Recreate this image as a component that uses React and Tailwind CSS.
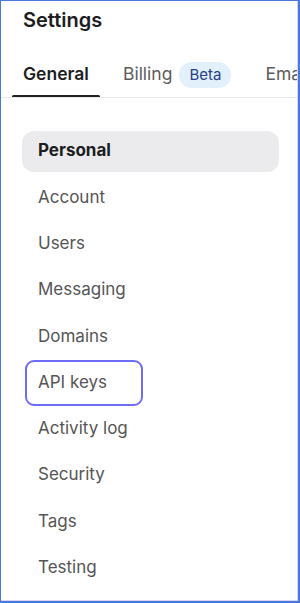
import React, { useState } from "react";

const menu = [
  "Personal",
  "Account",
  "Users",
  "Messaging",
  "Domains",
  "API keys",
  "Activity log",
  "Security",
  "Tags",
  "Testing",
];

const App = () => {
  const [tab, setTab] = useState("General");
  const [active, setActive] = useState("Personal");
  const focused = "API keys";

  return (
    <div
      className="w-[300px] h-[603px] overflow-hidden bg-white border-[#4a78d8] border-t border-l border-r-2 border-b-2"
      style={{ fontFamily: "Inter, 'Noto Sans', sans-serif" }}
    >
      <div className="h-full border-r border-b border-[#d9d4f5]">
        {/* header */}
        <h1 className="pl-[22px] pt-[5px] text-[20px] leading-[28px] font-semibold text-[#1d1d1f]">
          Settings
        </h1>

        {/* tabs */}
        <div className="mt-[24px] border-b border-[#e8e8ea] flex gap-[12px] pl-[11px] whitespace-nowrap overflow-hidden">
          {["General", "Billing", "Email"].map((t) => (
            <button
              key={t}
              onClick={() => setTab(t)}
              className={`relative shrink-0 flex items-center h-[39px] px-[11px] pb-[6px] text-[17.5px] ${
                tab === t ? "font-semibold text-[#1d1d1f]" : "text-[#5c5c5c]"
              }`}
            >
              {t}
              {t === "Billing" ? (
                <span className="ml-[7px] h-[26px] px-[10px] rounded-full bg-[#e2f0fc] text-[#27408b] text-[15px] leading-[26px] font-normal">
                  Beta
                </span>
              ) : null}
              {tab === t ? (
                <span className="absolute left-0 right-0 -bottom-px h-[3px] rounded-full bg-[#222]"></span>
              ) : null}
            </button>
          ))}
        </div>

        {/* side menu */}
        <div className="mt-[30px] pl-[21px] pr-[18px]">
          {menu.map((m) => (
            <div key={m} className="h-[46.3px] flex items-center">
              {m === focused ? (
                <div
                  onClick={() => setActive(m)}
                  className="ml-[3px] h-[46px] w-[118px] flex items-center pl-[11px] rounded-[9px] border-2 border-[#6e6cf4] text-[17px] text-[#555] cursor-pointer"
                >
                  {m}
                </div>
              ) : (
                <div
                  onClick={() => setActive(m)}
                  className={`w-full h-[41px] flex items-center px-[16px] rounded-[12px] text-[17px] cursor-pointer ${
                    active === m
                      ? "bg-[#ebebed] font-bold text-[#1d1d1f]"
                      : "text-[#555]"
                  }`}
                >
                  {m}
                </div>
              )}
            </div>
          ))}
        </div>
      </div>
    </div>
  );
};

export default App;
